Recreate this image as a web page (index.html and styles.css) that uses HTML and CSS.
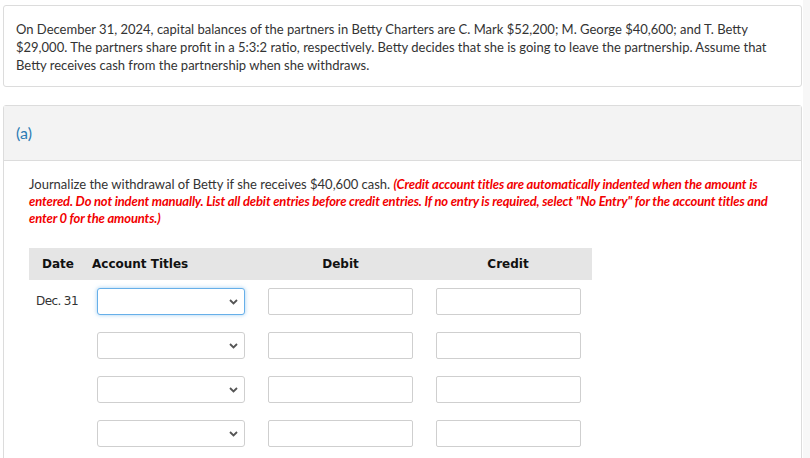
FILE: index.html
```html
<!DOCTYPE html>
<html>
<head>
<meta charset="utf-8">
<link rel="stylesheet" href="styles.css">
</head>
<body>
<div class="page">
  <div class="card intro">
    <p>On December 31, 2024, capital balances of the partners in Betty Charters are C. Mark $52,200; M. George $40,600; and T. Betty $29,000. The partners share profit in a 5:3:2 ratio, respectively. Betty decides that she is going to leave the partnership. Assume that Betty receives cash from the partnership when she withdraws.</p>
  </div>
  <div class="card part">
    <div class="part-head">(a)</div>
    <div class="part-body">
      <p class="question">Journalize the withdrawal of Betty if she receives $40,600 cash. <em class="note">(Credit account titles are automatically indented when the amount is entered. Do not indent manually. List all debit entries before credit entries. If no entry is required, select "No Entry" for the account titles and enter 0 for the amounts.)</em></p>
      <div class="journal">
        <div class="jh jh-date">Date</div>
        <div class="jh jh-acct">Account Titles</div>
        <div class="jh jh-num">Debit</div>
        <div class="jh jh-num">Credit</div>

        <div class="jd">Dec. 31</div>
        <div class="ja"><div class="sel focus"><svg class="chev" width="9" height="6" viewBox="0 0 9 6"><path d="M1 1 L4.5 4.5 L8 1" fill="none" stroke="#555" stroke-width="1.8"/></svg></div></div>
        <div class="jn"><div class="inp"></div></div>
        <div class="jn"><div class="inp"></div></div>

        <div class="jd"></div>
        <div class="ja"><div class="sel"><svg class="chev" width="9" height="6" viewBox="0 0 9 6"><path d="M1 1 L4.5 4.5 L8 1" fill="none" stroke="#555" stroke-width="1.8"/></svg></div></div>
        <div class="jn"><div class="inp"></div></div>
        <div class="jn"><div class="inp"></div></div>

        <div class="jd"></div>
        <div class="ja"><div class="sel"><svg class="chev" width="9" height="6" viewBox="0 0 9 6"><path d="M1 1 L4.5 4.5 L8 1" fill="none" stroke="#555" stroke-width="1.8"/></svg></div></div>
        <div class="jn"><div class="inp"></div></div>
        <div class="jn"><div class="inp"></div></div>

        <div class="jd"></div>
        <div class="ja"><div class="sel"><svg class="chev" width="9" height="6" viewBox="0 0 9 6"><path d="M1 1 L4.5 4.5 L8 1" fill="none" stroke="#555" stroke-width="1.8"/></svg></div></div>
        <div class="jn"><div class="inp"></div></div>
        <div class="jn"><div class="inp"></div></div>
      </div>
    </div>
  </div>
</div>
</body>
</html>
```
FILE: styles.css
```css
html, body {
  margin: 0;
  padding: 0;
  background: #f7f7f7;
  height: 100%;
  overflow: hidden;
}
.page {
  width: 803px;
  min-height: 100%;
  background: #fff;
  padding-top: 5px;
  box-sizing: border-box;
  font-family: Lato, "Open Sans", sans-serif;
  color: #333;
}
.card {
  margin-left: 3px;
  width: 799px;
  box-sizing: border-box;
  border: 1px solid #dcdcdc;
  border-radius: 3px;
  background: #fff;
}
.intro {
  padding: 14px 24px 12px 12px;
}
.intro p {
  margin: 0;
  font-size: 13px;
  line-height: 18px;
}
.part {
  margin-top: 18px;
  padding-bottom: 60px;
}
.part-head {
  background: #f3f3f3;
  height: 54px;
  border-bottom: 1px solid #dcdcdc;
  padding-left: 12px;
  font-size: 16px;
  line-height: 54px;
  color: #2c7bb4;
}
.part-body {
  padding: 15px 14px 0 25px;
}
.question {
  margin: 0;
  font-size: 13px;
  line-height: 17px;
}
.note {
  color: #f20000;
  font-weight: bold;
  font-style: italic;
  letter-spacing: -0.15px;
}
.journal {
  margin-top: 21px;
  display: grid;
  grid-template-columns: 63px 165px 167px 168px;
  row-gap: 17px;
  font-family: "DejaVu Sans", Verdana, sans-serif;
}
.jh {
  background: #e5e5e5;
  height: 32px;
  line-height: 32px;
  font-size: 12px;
  font-weight: bold;
  color: #111;
  margin-bottom: -9px;
}
.jh-date { padding-left: 13px; }
.jh-num { text-align: center; }
.jd {
  font-size: 12px;
  color: #333;
  padding-left: 7px;
  line-height: 27px;
  letter-spacing: -0.6px;
}
.ja { padding-left: 5px; }
.jn { display: flex; justify-content: center; }
.sel {
  width: 148px;
  height: 27px;
  box-sizing: border-box;
  border: 1px solid #cfcfcf;
  border-radius: 3px;
  display: flex;
  align-items: center;
  justify-content: flex-end;
  padding-right: 6px;
  background: #fff;
}
.sel.focus {
  border-color: #66afe9;
  box-shadow: 0 0 4px rgba(102, 175, 233, 0.6);
}
.inp {
  width: 145px;
  height: 27px;
  box-sizing: border-box;
  border: 1px solid #cfcfcf;
  border-radius: 2px;
  background: #fff;
}
```
